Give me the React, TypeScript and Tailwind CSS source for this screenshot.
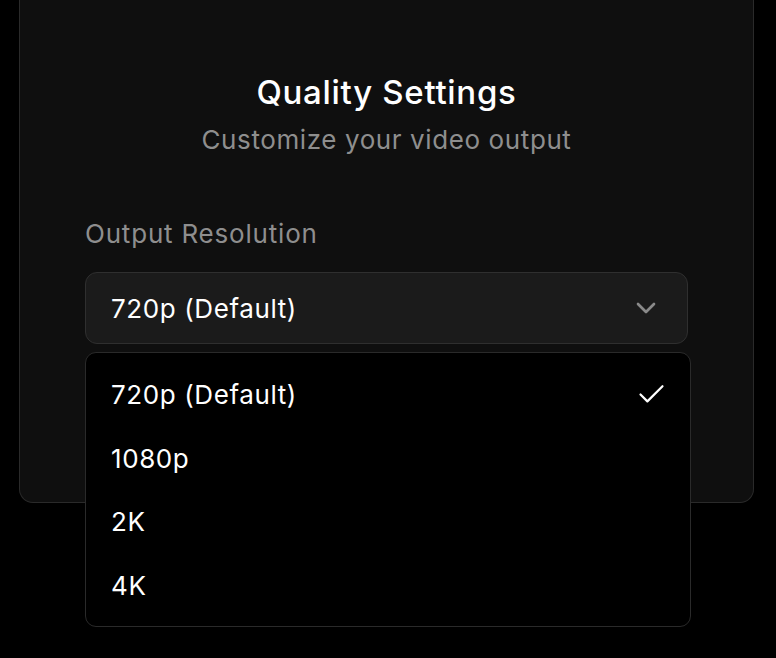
import React from "react";
import { Check, ChevronDown } from "lucide-react";

const items = ["720p (Default)", "1080p", "2K", "4K"];

export default function App() {
  return (
    <div
      className="min-h-[658px] w-[776px] bg-black"
      style={{ fontFamily: "Inter, 'Noto Sans', sans-serif" }}
    >
      <div className="ml-[19px] w-[735px] rounded-b-[14px] border border-t-0 border-[#2a2a2a] bg-[#0f0f0f] px-[65px] pt-[70px] pb-[158px]">
        <div className="flex flex-col items-center">
          <h1 className="text-[33px] leading-[44px] font-medium text-white tracking-[0.7px]">
            Quality Settings
          </h1>
          <p className="mt-[8px] text-[26px] leading-[36px] text-[#8e8e8e] tracking-[0.6px]">
            Customize your video output
          </p>
        </div>
        <div className="relative mt-[59px]">
          <label className="block text-[26px] leading-[34px] text-[#8e8e8e] tracking-[0.8px]">
            Output Resolution
          </label>
          <div className="mt-[21px] flex h-[72px] w-[603px] items-center justify-between rounded-[12px] border border-[#2f2f2f] bg-[#1b1b1b] pl-[25px] pr-[25px]">
            <span className="text-[26px] text-white tracking-[0.6px]">720p (Default)</span>
            <ChevronDown size={32} strokeWidth={2} className="text-[#8a8a8a]" />
          </div>
          <div className="absolute left-0 top-[135px] z-10 w-[606px] rounded-[11px] border border-[#2a2a2a] bg-black pt-[10px] pb-[9px]">
            {items.map((it, i) => (
              <div
                key={it}
                className="flex h-[63.5px] items-center justify-between pl-[25px] pr-[22px]"
              >
                <span className="text-[26px] text-white tracking-[0.6px]">{it}</span>
                {i === 0 && (
                  <Check size={33} strokeWidth={1.6} className="text-white" />
                )}
              </div>
            ))}
          </div>
        </div>
      </div>
    </div>
  );
}
